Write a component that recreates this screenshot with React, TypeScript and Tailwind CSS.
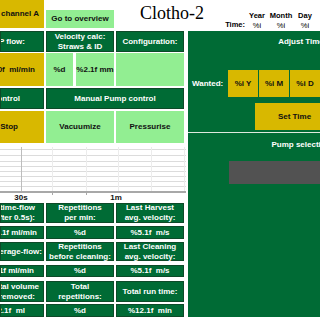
import React from 'react';

const dark = 'bg-[#006b35] border border-[#0d4a28] text-white';
const light = 'bg-[#92ee92] text-[#111]';
const yellow = 'bg-[#d8b800] text-[#111]';

const Chart: React.FC = () => {
  const rows = [2, 8, 14, 19, 24, 29, 34, 39];
  const cols = [52, 86, 118, 151, 184];
  return (
    <svg width="186" height="53" className="block">
      {rows.map((y) => (
        <line key={y} x1="0" x2="186" y1={y + 0.5} y2={y + 0.5} stroke="#dcdcdc" />
      ))}
      {cols.map((x) => (
        <line key={x} x1={x + 0.5} x2={x + 0.5} y1="0" y2="44" stroke="#ececec" />
      ))}
      <line x1="21.5" x2="21.5" y1="0" y2="44" stroke="#bdbdbd" />
      <line x1="0" x2="186" y1="45" y2="45" stroke="#a8a8a8" strokeWidth="2" />
      <line x1="52.5" x2="52.5" y1="46" y2="48" stroke="#a8a8a8" />
      <line x1="86.5" x2="86.5" y1="46" y2="48" stroke="#a8a8a8" />
      <text x="21" y="53" textAnchor="middle" fontSize="8" fontWeight="700" fontFamily="Liberation Sans, sans-serif" fill="#111">30s</text>
      <text x="116" y="53" textAnchor="middle" fontSize="8" fontWeight="700" fontFamily="Liberation Sans, sans-serif" fill="#111">1m</text>
    </svg>
  );
};

const App: React.FC = () => {
  return (
    <div className="w-[320px] h-[320px] overflow-hidden bg-white font-['Liberation_Sans',sans-serif] font-bold text-[8px] leading-[10px]">
      {/* Top bar */}
      <div className="flex h-[31px] items-start">
        <div className={`${yellow} w-[44px] h-[28px] shrink-0 flex items-center justify-end pr-[5px] overflow-hidden whitespace-nowrap`}>
          Pressure channel A
        </div>
        <div className={`${light} ml-[2px] mt-[10px] w-[68px] h-[18px] shrink-0 flex items-center justify-center whitespace-nowrap`}>
          Go to overview
        </div>
        <div className="ml-[26px] mt-[4px] font-['Liberation_Serif',serif] font-normal text-[18px] leading-[18px] text-black whitespace-nowrap">
          Clotho-2
        </div>
        <div className="ml-auto mr-[3px] flex text-[7.5px] text-black">
          <div className="w-[25px] pt-[20px] text-right">Time:</div>
          {['Year', 'Month', 'Day'].map((h) => (
            <div key={h} className="w-[24px] pt-[11px] flex flex-col items-center">
              <span>{h}</span>
              <span className="font-normal">%i</span>
            </div>
          ))}
        </div>
      </div>

      {/* Main */}
      <div className="flex gap-[4px]">
        {/* Left column */}
        <div className="w-[184px] shrink-0 flex flex-col">
          <div className="flex gap-[2px] h-[21px]">
            <div className={`${dark} w-[44px] flex items-center justify-end pr-[18px] overflow-hidden whitespace-nowrap`}>P flow:</div>
            <div className={`${dark} w-[68px] flex flex-col items-center justify-center text-center`}>
              <span>Velocity calc:</span>
              <span>Straws &amp; ID</span>
            </div>
            <div className={`${dark} w-[68px] flex items-center justify-center`}>Configuration:</div>
          </div>

          <div className="flex gap-[2px] h-[33px] mt-[1px]">
            <div className={`${yellow} w-[44px] flex items-center justify-end pr-[9px] overflow-hidden whitespace-nowrap`}>%5.0f&nbsp; ml/min</div>
            <div className="w-[68px] flex gap-[3px]">
              <div className={`${light} w-[27px] flex items-center justify-center`}>%d</div>
              <div className={`${light} w-[38px] flex items-center justify-center whitespace-nowrap`}>%2.1f mm</div>
            </div>
            <div className={`${light} w-[68px]`} />
          </div>

          <div className="flex gap-[2px] h-[21px] mt-[2px]">
            <div className={`${dark} w-[44px] flex items-center justify-end pr-[23px] overflow-hidden whitespace-nowrap`}>Pump control</div>
            <div className={`${dark} w-[138px] flex items-center justify-center`}>Manual Pump control</div>
          </div>

          <div className="flex gap-[2px] h-[32px] mt-[2px]">
            <div className={`${yellow} w-[44px] flex items-center justify-end pr-[26px]`}>Stop</div>
            <div className={`${light} w-[68px] flex items-center justify-center`}>Vacuumize</div>
            <div className={`${light} w-[68px] flex items-center justify-center`}>Pressurise</div>
          </div>

          <div className="mt-[4px] h-[53px]">
            <Chart />
          </div>

          {/* Stats table */}
          <div className="flex gap-[2px] h-[20px] mt-[3px]">
            <div className={`${dark} w-[44px] flex flex-col items-end justify-center pr-[8px] overflow-hidden whitespace-nowrap`}>
              <span>Realtime-flow</span>
              <span>(after 0.5s):</span>
            </div>
            <div className={`${dark} w-[68px] flex flex-col items-center justify-center`}>
              <span>Repetitions</span>
              <span>per min:</span>
            </div>
            <div className={`${dark} w-[68px] flex flex-col items-center justify-center`}>
              <span>Last Harvest</span>
              <span>avg. velocity:</span>
            </div>
          </div>
          <div className="flex gap-[2px] h-[13px] mt-[3px]">
            <div className={`${dark} w-[44px] flex items-center justify-end pr-[6px] overflow-hidden whitespace-nowrap`}>%5.1f ml/min</div>
            <div className={`${dark} w-[68px] flex items-center justify-center`}>%d</div>
            <div className={`${dark} w-[68px] flex items-center justify-center whitespace-nowrap`}>%5.1f&nbsp; m/s</div>
          </div>

          <div className="flex gap-[2px] h-[19px] mt-[3px]">
            <div className={`${dark} w-[44px] flex items-center justify-end pr-[1px] overflow-hidden whitespace-nowrap`}>Average-flow:</div>
            <div className={`${dark} w-[68px] flex flex-col items-center justify-center whitespace-nowrap`}>
              <span>Repetitions</span>
              <span>before cleaning:</span>
            </div>
            <div className={`${dark} w-[68px] flex flex-col items-center justify-center`}>
              <span>Last Cleaning</span>
              <span>avg. velocity:</span>
            </div>
          </div>
          <div className="flex gap-[2px] h-[12px] mt-[4px]">
            <div className={`${dark} w-[44px] flex items-center justify-end pr-[9px] overflow-hidden whitespace-nowrap`}>%5.1f ml/min</div>
            <div className={`${dark} w-[68px] flex items-center justify-center`}>%d</div>
            <div className={`${dark} w-[68px] flex items-center justify-center whitespace-nowrap`}>%5.1f&nbsp; m/s</div>
          </div>

          <div className="flex gap-[2px] h-[21px] mt-[4px]">
            <div className={`${dark} w-[44px] flex flex-col items-end justify-center pr-[4px] overflow-hidden whitespace-nowrap`}>
              <span>Total volume</span>
              <span className="pr-[4px]">removed:</span>
            </div>
            <div className={`${dark} w-[68px] flex flex-col items-center justify-center`}>
              <span>Total</span>
              <span>repetitions:</span>
            </div>
            <div className={`${dark} w-[68px] flex items-center justify-center whitespace-nowrap`}>Total run time:</div>
          </div>
          <div className="flex gap-[2px] h-[13px] mt-[2px]">
            <div className={`${dark} w-[44px] flex items-center justify-end pr-[18px] overflow-hidden whitespace-nowrap`}>%12.1f&nbsp; ml</div>
            <div className={`${dark} w-[68px] flex items-center justify-center`}>%d</div>
            <div className={`${dark} w-[68px] flex items-center justify-center whitespace-nowrap`}>%12.1f&nbsp; min</div>
          </div>
        </div>

        {/* Right panel */}
        <div className="w-[226px] shrink-0 flex flex-col text-white">
          <div className="h-[101px] bg-[#006b35] pt-[6px]">
            <div className="text-center">Adjust Time</div>
            <div className="flex items-center mt-[23px] h-[27px]">
              <div className="w-[40px] pl-[4px]">Wanted:</div>
              <div className="flex gap-[1px] h-[27px]">
                {['%i Y', '%i M', '%i D'].map((t) => (
                  <div key={t} className="w-[30px] bg-[#d8b800] text-[#111] flex items-center justify-center">{t}</div>
                ))}
              </div>
            </div>
            <div className="mt-[6px] ml-[67px] w-[79px] h-[27px] bg-[#d8b800] text-[#111] flex items-center justify-center">
              Set Time
            </div>
          </div>
          <div className="h-[1px] bg-[#dfe9df]" />
          <div className="h-[184px] bg-[#006b35] pt-[7px]">
            <div className="text-center">Pump selection</div>
            <div className="mt-[11px] ml-[41px] w-[145px] h-[23px] bg-[#525252]" />
          </div>
        </div>
      </div>
    </div>
  );
};

export default App;
